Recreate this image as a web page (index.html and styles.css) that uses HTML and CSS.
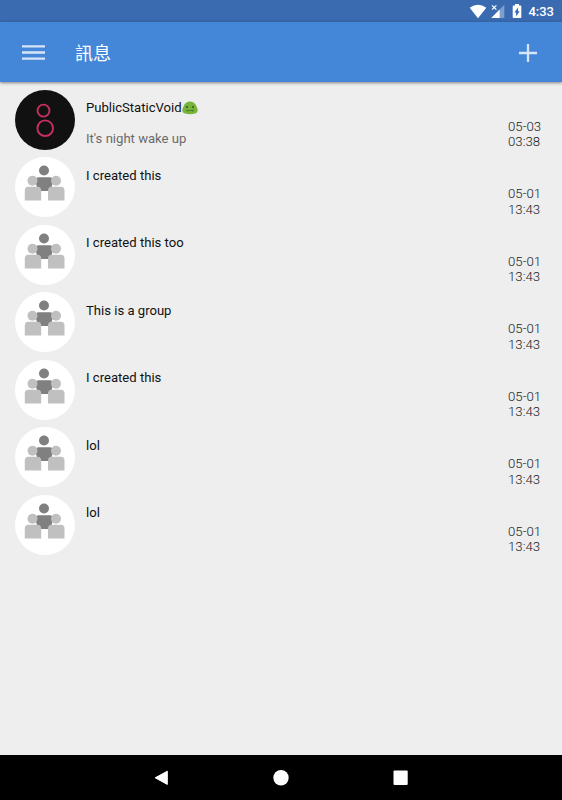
FILE: index.html
```html
<!DOCTYPE html>
<html lang="zh-Hant">
<head>
    <meta charset="UTF-8">
    <meta name="viewport" content="width=device-width, initial-scale=1.0">
    <title>訊息</title>
    <link rel="stylesheet" href="styles.css">
</head>
<body>
    <!-- shared group avatar -->
    <svg class="defs" width="0" height="0">
        <symbol id="group" viewBox="0 0 60 60">
            <circle cx="29" cy="13.500" r="5" fill="#808080"/>
            <path d="M23.500 20.200h11.500q2.500 0 2.500 2.500v4l-2 7.300H23l-2-7.300v-4q0-2.500 2.500-2.500z" fill="#808080"/>
            <g fill="#c0c0c0">
                <circle cx="17.500" cy="23.800" r="5"/>
                <circle cx="41" cy="23.800" r="5"/>
                <path d="M13.300 29.800h9.400q3.500 0 3.500 3.800v9.900H9.800v-9.900q0-3.800 3.500-3.800z"/>
                <path d="M36.500 29.800h9.500q3.500 0 3.500 3.800v9.900H33v-9.900q0-3.800 3.500-3.800z"/>
            </g>
        </symbol>
    </svg>

    <div class="status-bar">
        <svg class="wifi" width="18" height="15" viewBox="0 0 18 15">
            <path d="M.7 3.700Q9-2.400 17.300 3.700L9 14.300z" fill="#fff"/>
        </svg>
        <svg class="signal" width="14" height="15" viewBox="0 0 14 15">
            <path d="M13.300.800v13.200H.300z" fill="#7f9fce"/>
            <path d="M8.600 5.600V14H.300z" fill="#fff"/>
            <path d="M0 0h6.500v6H0z" fill="#3a6bb0"/>
            <path d="M1 1.300l4.400 4.400M5.400 1.300L1 5.700" stroke="#fff" stroke-width="1.200"/>
        </svg>
        <svg class="battery" width="10" height="15" viewBox="0 0 10 15">
            <path d="M3 0h4v1.500h1.500q.8 0 .8.800v11q0 .8-.8.800h-7q-.8 0-.8-.800v-11q0-.8.8-.800H3z" fill="#fff"/>
            <path d="M6 3.500v3.800h1.700L4.100 12.400V8.600H2.400z" fill="#3a6bb0"/>
        </svg>
        <span class="clock">4:33</span>
    </div>

    <header class="app-bar">
        <svg class="menu" width="23" height="17" viewBox="0 0 23 17">
            <path d="M0 2.400h23M0 8.500h23M0 14.600h23" stroke="#d6e5f8" stroke-width="2.300"/>
        </svg>
        <h1>訊息</h1>
        <svg class="add" width="18" height="18" viewBox="0 0 18 18">
            <path d="M0 9h18M9 0v18" stroke="#d6e5f8" stroke-width="2.300"/>
        </svg>
    </header>

    <main class="chat-list">
        <div class="chat">
            <svg class="avatar dark" viewBox="0 0 60 60">
                <g fill="none" stroke="#c7305e" stroke-width="1.900">
                    <circle cx="28.500" cy="20.600" r="6"/>
                    <circle cx="30.200" cy="38.200" r="7.800"/>
                </g>
            </svg>
            <div class="text">
                <div class="name"><span>PublicStaticVoid</span><svg class="emoji" width="16" height="14" viewBox="0 0 16 14">
                        <path d="M1.700 5C2.700 2 5.100.400 8 .400s5.300 1.600 6.300 4.600c.3.900.7 1.500 1.100 2.500.8 2-.2 4.300-2.200 5-3.200 1.100-7.200 1.100-10.400 0-2-.7-3-3-2.200-5 .4-1 .8-1.600 1.100-2.500z" fill="#78b43c"/>
                        <path d="M4.500 9.300q3.500.7 7 0" fill="none" stroke="#48752c" stroke-width=".9"/>
                        <path d="M5.300 8.800v2M10.700 8.800v2" stroke="#48752c" stroke-width=".8"/>
                        <circle cx="5" cy="6" r=".9" fill="#294a20"/>
                        <circle cx="11" cy="6" r=".9" fill="#294a20"/>
                    </svg></div>
                <div class="preview">It's night wake up</div>
            </div>
            <div class="time">05-03<br>03:38</div>
        </div>
        <div class="chat">
            <svg class="avatar"><use href="#group"/></svg>
            <div class="text"><div class="name">I created this</div></div>
            <div class="time">05-01<br>13:43</div>
        </div>
        <div class="chat">
            <svg class="avatar"><use href="#group"/></svg>
            <div class="text"><div class="name">I created this too</div></div>
            <div class="time">05-01<br>13:43</div>
        </div>
        <div class="chat">
            <svg class="avatar"><use href="#group"/></svg>
            <div class="text"><div class="name">This is a group</div></div>
            <div class="time">05-01<br>13:43</div>
        </div>
        <div class="chat">
            <svg class="avatar"><use href="#group"/></svg>
            <div class="text"><div class="name">I created this</div></div>
            <div class="time">05-01<br>13:43</div>
        </div>
        <div class="chat">
            <svg class="avatar"><use href="#group"/></svg>
            <div class="text"><div class="name">lol</div></div>
            <div class="time">05-01<br>13:43</div>
        </div>
        <div class="chat">
            <svg class="avatar"><use href="#group"/></svg>
            <div class="text"><div class="name">lol</div></div>
            <div class="time">05-01<br>13:43</div>
        </div>
    </main>

    <nav class="nav-bar">
        <svg width="15" height="16" viewBox="0 0 15 16">
            <path d="M13.300 1.200v13.200L1.200 7.800z" fill="#fff" stroke="#fff" stroke-linejoin="round"/>
        </svg>
        <svg width="16" height="16" viewBox="0 0 16 16">
            <circle cx="8" cy="7.700" r="7.700" fill="#fff"/>
        </svg>
        <svg width="15" height="16" viewBox="0 0 15 16">
            <rect x=".5" y=".5" width="14.200" height="14.400" rx="1" fill="#fff"/>
        </svg>
    </nav>
</body>
</html>
```

FILE: styles.css
```css
body {
    margin: 0;
    height: 100vh;
    display: flex;
    flex-direction: column;
    overflow: hidden;
    background-color: #eeeeee;
    font-family: Roboto, "Noto Sans CJK TC", sans-serif;
    font-size: 13.1px;
    line-height: 15px;
    color: #1a1a1a;
}
svg {
    display: block;
    flex-shrink: 0;
}
.defs {
    position: absolute;
}
.status-bar {
    height: 22px;
    flex-shrink: 0;
    display: flex;
    align-items: center;
    justify-content: flex-end;
    padding-right: 8px;
    box-sizing: border-box;
    background-color: #3a6bb0;
    color: #fff;
}
.signal {
    margin-left: 4px;
}
.battery {
    margin-left: 7px;
}
.clock {
    margin-left: 6px;
    padding-top: 1px;
    font-weight: 500;
    font-size: 13px;
}
.app-bar {
    height: 60px;
    flex-shrink: 0;
    display: flex;
    align-items: center;
    padding: 1px 25px 0 22px;
    box-sizing: border-box;
    background-color: #4486d7;
    box-shadow: 0 1px 3px rgba(0, 0, 0, 0.45);
}
.app-bar h1 {
    flex: 1;
    margin: 0 0 0 30px;
    padding-top: 2px;
    font-size: 18px;
    font-weight: 400;
    line-height: 24px;
    color: #fff;
}
.chat-list {
    flex: 1;
    padding: 7.9px 20px 0 15px;
}
.chat {
    display: flex;
    height: 67.5px;
}
.avatar {
    width: 60px;
    height: 60px;
    border-radius: 50%;
    background-color: #fff;
}
.avatar.dark {
    background-color: #111111;
}
.text {
    flex: 1;
    margin-left: 11px;
    padding-top: 10.6px;
}
.name {
    display: flex;
    align-items: center;
    height: 15px;
    color: #111;
}
.preview {
    margin-top: 16px;
    color: #6a6a6a;
}
.time {
    width: 34px;
    padding-top: 29px;
    font-size: 13.2px;
    font-weight: 300;
    line-height: 15.5px;
    color: #222;
}
.nav-bar {
    height: 45px;
    flex-shrink: 0;
    display: flex;
    align-items: center;
    justify-content: center;
    gap: 104px;
    background-color: #000;
}
```
